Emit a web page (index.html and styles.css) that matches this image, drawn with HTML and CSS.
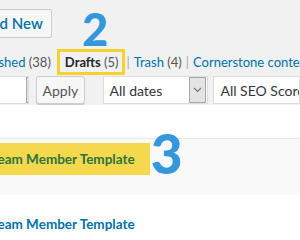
FILE: index.html
```html
<!DOCTYPE html>
<html lang="en">
<head>
    <meta charset="UTF-8" />
    <title>Posts</title>
    <link rel="stylesheet" href="styles.css">
</head>
<body>
    <div class="wrap">
        <div class="heading">
            <a class="add-new" href="#">Add New</a>
            <span class="step step-two">2</span>
        </div>

        <ul class="subsubsub">
            <li><a href="#">Published <span class="count">(38)</span></a></li>
            <li class="current"><a href="#">Drafts <span class="count">(5)</span></a></li>
            <li class="sep">|</li>
            <li><a href="#">Trash <span class="count">(4)</span></a></li>
            <li class="sep">|</li>
            <li><a href="#">Cornerstone content <span class="count">(0)</span></a></li>
        </ul>

        <div class="tablenav">
            <div class="select select-bulk">
                <span class="select-label">Bulk Actions</span>
                <span class="select-arrow"><svg width="9" height="6" viewBox="0 0 9 6"><path d="M1 1l3.5 3.5L8 1" fill="none" stroke="#777" stroke-width="1.1"/></svg></span>
            </div>
            <button class="button">Apply</button>
            <div class="select select-dates">
                <span class="select-label">All dates</span>
                <span class="select-arrow"><svg width="9" height="6" viewBox="0 0 9 6"><path d="M1 1l3.5 3.5L8 1" fill="none" stroke="#777" stroke-width="1.1"/></svg></span>
            </div>
            <div class="select select-seo">
                <span class="select-label">All SEO Scores</span>
            </div>
        </div>
    </div>

    <div class="posts">
        <div class="row row-alt">
            <a class="row-title highlight" href="#">Team Member Template</a>
            <span class="step step-three">3</span>
        </div>
        <div class="row">
            <a class="row-title" href="#">Team Member Template</a>
        </div>
    </div>
</body>
</html>
```

FILE: styles.css
```css
body {
    margin: 0;
    width: 300px;
    height: 240px;
    overflow: hidden;
    background: #fff;
    font-family: 'Lato', 'Open Sans', sans-serif;
    font-size: 14px;
    color: #444;
}
a {
    color: #0073aa;
    text-decoration: none;
}
.wrap {
    background: #f1f1f1;
    height: 105px;
    overflow: hidden;
}
.heading {
    display: flex;
    align-items: flex-start;
    padding-top: 9px;
    height: 38px;
}
.add-new {
    display: block;
    margin-left: -28px;
    height: 27px;
    line-height: 27px;
    padding: 0 8px 0 8px;
    border: 1px solid #ccc;
    border-radius: 2px;
    background: #f7f7f7;
    font-size: 15px;
    font-weight: 600;
    white-space: nowrap;
}
.step {
    font-family: 'Lato', sans-serif;
    font-weight: 900;
    color: #3497dc;
    line-height: 1;
}
.step-two {
    font-size: 45px;
    margin-left: 30px;
    margin-top: -2px;
}
.subsubsub {
    list-style: none;
    margin: 0 0 0 -30px;
    padding: 0;
    display: flex;
    align-items: center;
    white-space: nowrap;
    height: 29px;
    font-size: 13px;
}
.subsubsub li {
    margin-right: 4px;
}
.subsubsub li:first-child {
    margin-right: 6px;
}
.subsubsub .count {
    color: #555;
    font-weight: 400;
}
.subsubsub .current {
    border: 3px solid #f7d22e;
    padding: 0 4px 0 5px;
    height: 20px;
    line-height: 20px;
    margin-right: 1px;
}
.subsubsub .current a {
    color: #23282d;
    font-weight: 700;
}
.subsubsub .sep {
    color: #aaa;
}
.tablenav {
    display: flex;
    align-items: center;
    height: 28px;
}
.select {
    display: flex;
    align-items: center;
    height: 26px;
    border: 1px solid #ddd;
    background: #fff;
    overflow: hidden;
    white-space: nowrap;
}
.select-label {
    flex: 1;
    padding-left: 6px;
    color: #32373c;
}
.select-arrow {
    width: 15px;
    height: 24px;
    margin-right: 1px;
    border: 1px solid #a9a9a9;
    background: #e3e3e3;
    display: flex;
    align-items: center;
    justify-content: center;
}
.select-bulk {
    width: 100px;
    margin-left: -58px;
}
.select-bulk .select-label {
    visibility: hidden;
}
.button {
    margin-left: 7px;
    width: 49px;
    height: 28px;
    border: 1px solid #ccc;
    border-radius: 3px;
    background: #f7f7f7;
    color: #555;
    font-family: inherit;
    font-size: 14px;
    box-shadow: 0 1px 0 #ccc;
}
.select-dates {
    width: 123px;
    margin-left: 18px;
}
.select-seo {
    width: 100px;
    margin-left: 5px;
}
.posts {
    padding-top: 33px;
}
.row {
    display: flex;
    align-items: center;
    height: 57px;
}
.row-alt {
    background: #f9f9f9;
    border-top: 1px solid #e8e8e8;
    height: 56px;
}
.row-title {
    font-size: 13.5px;
    font-weight: 700;
    margin-left: -9px;
    white-space: nowrap;
}
.highlight {
    background: #f6d84e;
    color: #2a7440;
    padding: 8px 15px 8px 0;
    margin-top: -16px;
}
.step-three {
    font-size: 55px;
    margin-left: 1px;
    margin-top: -28px;
}
```
